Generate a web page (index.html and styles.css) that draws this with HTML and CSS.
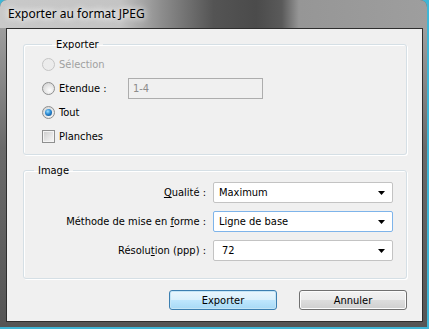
FILE: index.html
```html
<!DOCTYPE html>
<html lang="fr">
  <head>
    <meta charset="UTF-8" />
    <title>Exporter au format JPEG</title>
    <link rel="stylesheet" href="styles.css">
  </head>
  <body>
    <div class="window">
      <div class="titlebar">
        <span class="title">Exporter au format JPEG</span>
      </div>
      <div class="frame">
        <div class="client">
          <fieldset class="group group-export">
            <legend>Exporter</legend>
            <div class="option disabled">
              <span class="radio"></span>
              <span>Sélection</span>
            </div>
            <div class="option">
              <span class="radio"></span>
              <span class="option-label">Etendue :</span>
              <span class="range">1-4</span>
            </div>
            <div class="option">
              <span class="radio checked"></span>
              <span>Tout</span>
            </div>
            <div class="option">
              <span class="checkbox"></span>
              <span>Planches</span>
            </div>
          </fieldset>

          <fieldset class="group group-image">
            <legend>Image</legend>
            <div class="fields">
              <span class="field-label"><u>Q</u>ualité :</span>
              <div class="select">
                <span>Maximum</span>
                <svg class="arrow" width="7" height="4" viewBox="0 0 7 4"><path d="M0 0h7L3.5 4z" fill="#000"/></svg>
              </div>

              <span class="field-label">Méthode de mise en <u>f</u>orme :</span>
              <div class="select focused">
                <span>Ligne de base</span>
                <svg class="arrow" width="7" height="4" viewBox="0 0 7 4"><path d="M0 0h7L3.5 4z" fill="#000"/></svg>
              </div>

              <span class="field-label">Résolu<u>t</u>ion (ppp) :</span>
              <div class="select">
                <span class="value-indent">72</span>
                <svg class="arrow" width="7" height="4" viewBox="0 0 7 4"><path d="M0 0h7L3.5 4z" fill="#000"/></svg>
              </div>
            </div>
          </fieldset>

          <div class="buttons">
            <button class="btn btn-default">Exporter</button>
            <button class="btn">Annuler</button>
          </div>
        </div>
      </div>
    </div>
  </body>
</html>
```

FILE: styles.css
```css
* {
  box-sizing: border-box;
  margin: 0;
  padding: 0;
}

body {
  width: 429px;
  height: 329px;
  background: #3fb6d6;
  font-family: "DejaVu Sans Condensed", "DejaVu Sans", sans-serif;
  font-size: 11px;
  color: #000;
  overflow: hidden;
}

.window {
  width: 427px;
  height: 327px;
  border-radius: 7px 7px 0 0;
  background: #5e5e5e;
  display: flex;
  flex-direction: column;
  overflow: hidden;
}

.titlebar {
  height: 28px;
  display: flex;
  align-items: center;
  padding-left: 8px;
  background: linear-gradient(to right, #c9c9c9 0, #c4c4c4 28%, #8c8c8c 38%, #545454 50%, #4b4b4b 60%, #5a5a5a 66%, #969696 70%, #9e9e9e 100%);
}

.title {
  font-family: "Noto Sans", sans-serif;
  font-size: 12px;
  color: #000;
  text-shadow: 0 0 6px #fff, 0 0 8px #fff;
  margin-top: -1px;
}

.frame {
  flex: 1;
  padding: 0 4px 5px 6px;
  background: linear-gradient(to bottom, #9e9e9e 0, #6a6a6a 40%, #555 100%);
}

.client {
  height: 100%;
  border: 1px solid #2e2e2e;
  background: #f0f0f0;
  padding: 9px 15px 0 16px;
}

.group {
  border: 1px solid #d5dfe5;
  border-radius: 3px;
  box-shadow: inset 1px 1px 0 #fff, 1px 1px 0 #fff;
}

.group legend {
  margin-left: 10px;
  padding: 0 4px;
  line-height: 13px;
}

.group-export {
  padding: 1px 0 6px 18px;
}

.option {
  height: 24px;
  display: flex;
  align-items: center;
  gap: 4px;
}

.option.disabled {
  color: #a0a0a0;
}

.option-label {
  width: 65px;
}

.range {
  width: 135px;
  height: 21px;
  border: 1px solid #adadad;
  color: #8c8c8c;
  padding: 3px 4px;
  line-height: 13px;
}

.radio {
  width: 13px;
  height: 13px;
  border-radius: 50%;
  border: 1px solid #8e8f8f;
  background: radial-gradient(circle at 60% 65%, #fdfdfd 0, #e0e0e0 60%, #cfcfcf 100%);
  display: flex;
  align-items: center;
  justify-content: center;
}

.disabled .radio {
  border-color: #c5c5c5;
  background: #ececec;
}

.radio.checked::after {
  content: "";
  width: 7px;
  height: 7px;
  border-radius: 50%;
  background: radial-gradient(circle at 40% 35%, #9fe0ff 0, #2a8ad4 45%, #0a3f7a 100%);
}

.checkbox {
  width: 13px;
  height: 13px;
  border: 1px solid #8e8f8f;
  box-shadow: inset 0 0 0 1px #f4f4f4;
  background: linear-gradient(135deg, #cbcbcb 0, #e8e8e8 60%, #f6f6f6 100%);
}

.group-image {
  margin-top: 9px;
  padding: 5px 13px 17px 0;
}

.fields {
  display: grid;
  grid-template-columns: 1fr 180px;
  column-gap: 7px;
  row-gap: 8px;
  align-items: center;
}

.field-label {
  text-align: right;
}

.select {
  height: 21px;
  background: #fff;
  border: 1px solid #c3c3c3;
  border-radius: 2px;
  display: flex;
  align-items: center;
  justify-content: space-between;
  padding: 0 7px 0 5px;
}

.select.focused {
  border-color: #7eb4ea;
}

.value-indent {
  padding-left: 3px;
}

.buttons {
  display: flex;
  justify-content: flex-end;
  gap: 22px;
  margin-top: 11px;
}

.btn {
  width: 108px;
  height: 20px;
  font-family: inherit;
  font-size: 11px;
  color: #000;
  border: 1px solid #707070;
  border-radius: 3px;
  background: linear-gradient(to bottom, #f2f2f2 0, #ebebeb 50%, #dddddd 51%, #cfcfcf 100%);
  box-shadow: inset 0 0 0 1px #fcfcfc;
}

.btn-default {
  border-color: #3c7fb1;
  background: linear-gradient(to bottom, #eaf6fd 0, #d9f0fc 50%, #bee6fd 51%, #a7d9f5 100%);
  box-shadow: inset 0 0 0 1px #c4e5f6;
}
```
